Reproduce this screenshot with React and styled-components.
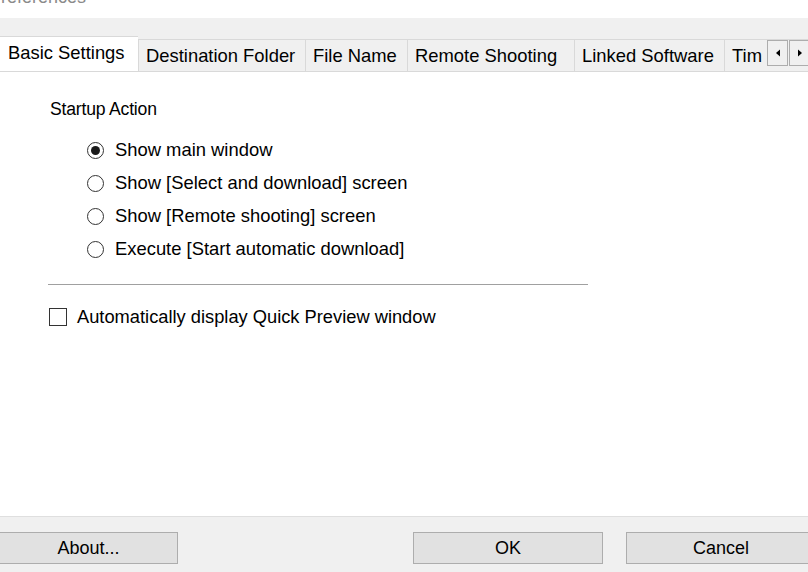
import React, { useState } from 'react';
import styled, { createGlobalStyle } from 'styled-components';

const GlobalStyle = createGlobalStyle`
  html, body {
    margin: 0;
    padding: 0;
    background: #ffffff;
  }
  body {
    font-family: "Liberation Sans", Arial, sans-serif;
    color: #000;
  }
`;

const Window = styled.div`
  width: 808px;
  height: 572px;
  display: flex;
  flex-direction: column;
  overflow: hidden;
  background: #fff;
`;

const TitleBar = styled.div`
  height: 18px;
  overflow: hidden;
  background: #fff;
  flex: none;
`;

const TitleText = styled.div`
  margin: -13px 0 0 -11px;
  font-size: 18px;
  color: #8a8a8a;
  line-height: 20px;
`;

const Strip = styled.div`
  background: #f0f0f0;
  padding-top: 17px;
  display: flex;
  align-items: flex-end;
  flex: none;
  position: relative;
`;

const Tabs = styled.div`
  display: flex;
  align-items: flex-end;
  flex: 1;
  overflow: hidden;
  border-bottom: 1px solid #d9d9d9;
  height: 36px;
`;

const Tab = styled.div`
  flex: none;
  box-sizing: border-box;
  height: ${p => (p.$active ? '36px' : '32px')};
  width: ${p => p.$w}px;
  padding: ${p => (p.$active ? '0 0 2px 8px' : '1px 0 0 7px')};
  display: flex;
  align-items: center;
  font-size: 18.4px;
  white-space: nowrap;
  overflow: hidden;
  background: ${p => (p.$active ? '#fff' : '#f0f0f0')};
  border: 1px solid #d9d9d9;
  border-left: ${p => (p.$first ? 'none' : '1px solid #d9d9d9')};
  border-right: none;
  border-bottom: ${p => (p.$active ? '1px solid #fff' : 'none')};
  margin-bottom: ${p => (p.$active ? '-1px' : '0')};
  position: relative;
  z-index: ${p => (p.$active ? 1 : 0)};
`;

const Scroller = styled.div`
  display: flex;
  position: absolute;
  right: -2px;
  bottom: 6px;
  z-index: 2;
`;

const ScrollButton = styled.div`
  width: 21px;
  height: 26px;
  box-sizing: border-box;
  border: 1px solid #adadad;
  background: #f0f0f0;
  display: flex;
  align-items: center;
  justify-content: center;
  margin-left: 1px;
`;

const Body = styled.div`
  flex: 1;
  background: #fff;
  padding: 26px 0 0 48px;
`;

const GroupLabel = styled.div`
  font-size: 17.6px;
  letter-spacing: -0.2px;
  margin-left: 2px;
  height: 22px;
  line-height: 22px;
`;

const RadioList = styled.div`
  display: flex;
  flex-direction: column;
  gap: 11px;
  margin: 19px 0 0 39px;
`;

const Option = styled.label`
  display: flex;
  align-items: center;
  gap: 11px;
  height: 22px;
  font-size: 18.4px;
  cursor: default;
`;

const RadioCircle = styled.span`
  width: 17px;
  height: 17px;
  box-sizing: border-box;
  border-radius: 50%;
  border: 1px solid #333;
  background: #fff;
  display: flex;
  align-items: center;
  justify-content: center;
  flex: none;
  &::after {
    content: '';
    width: 9px;
    height: 9px;
    border-radius: 50%;
    background: #1a1a1a;
    display: ${p => (p.$on ? 'block' : 'none')};
  }
`;

const Divider = styled.div`
  width: 540px;
  height: 1px;
  background: #a0a0a0;
  margin: 24px 0 0 0;
`;

const CheckRow = styled.label`
  display: flex;
  align-items: center;
  gap: 10px;
  margin: 22px 0 0 1px;
  height: 20px;
  font-size: 18.3px;
`;

const CheckBox = styled.span`
  width: 18px;
  height: 18px;
  box-sizing: border-box;
  border: 1px solid #333;
  background: #fff;
  flex: none;
`;

const Footer = styled.div`
  flex: none;
  background: #f0f0f0;
  border-top: 1px solid #dfdfdf;
  display: flex;
  align-items: flex-start;
  padding-top: 15px;
  box-sizing: border-box;
  height: 56px;
`;

const Button = styled.div`
  width: ${p => p.$w}px;
  height: 32px;
  box-sizing: border-box;
  background: #e1e1e1;
  border: 1px solid #adadad;
  display: flex;
  align-items: center;
  justify-content: center;
  font-size: 18px;
  margin-left: ${p => p.$ml || 0}px;
  flex: none;
`;

const tabs = [
  { label: 'Basic Settings', w: 138 },
  { label: 'Destination Folder', w: 167 },
  { label: 'File Name', w: 102 },
  { label: 'Remote Shooting', w: 167 },
  { label: 'Linked Software', w: 150 },
  { label: 'Tim', w: 120 },
];

const options = [
  'Show main window',
  'Show [Select and download] screen',
  'Show [Remote shooting] screen',
  'Execute [Start automatic download]',
];

export default function App() {
  const [choice, setChoice] = useState(0);
  return (
    <Window>
      <GlobalStyle />
      <TitleBar>
        <TitleText>Preferences</TitleText>
      </TitleBar>
      <Strip>
        <Tabs>
          {tabs.map((t, i) => (
            <Tab key={t.label} $w={t.w} $active={i === 0} $first={i === 0}>
              {t.label}
            </Tab>
          ))}
        </Tabs>
        <Scroller>
          <ScrollButton>
            <svg width="6" height="8" viewBox="0 0 6 8"><path d="M5 0.5 L1 4 L5 7.5 Z" fill="#000" /></svg>
          </ScrollButton>
          <ScrollButton>
            <svg width="6" height="8" viewBox="0 0 6 8"><path d="M1 0.5 L5 4 L1 7.5 Z" fill="#000" /></svg>
          </ScrollButton>
        </Scroller>
      </Strip>
      <Body>
        <GroupLabel>Startup Action</GroupLabel>
        <RadioList>
          {options.map((o, i) => (
            <Option key={o} onClick={() => setChoice(i)}>
              <RadioCircle $on={choice === i} />
              {o}
            </Option>
          ))}
        </RadioList>
        <Divider />
        <CheckRow>
          <CheckBox />
          Automatically display Quick Preview window
        </CheckRow>
      </Body>
      <Footer>
        <Button $w={179} $ml={-1}>About...</Button>
        <Button $w={190} $ml={235}>OK</Button>
        <Button $w={190} $ml={23}>Cancel</Button>
      </Footer>
    </Window>
  );
}
